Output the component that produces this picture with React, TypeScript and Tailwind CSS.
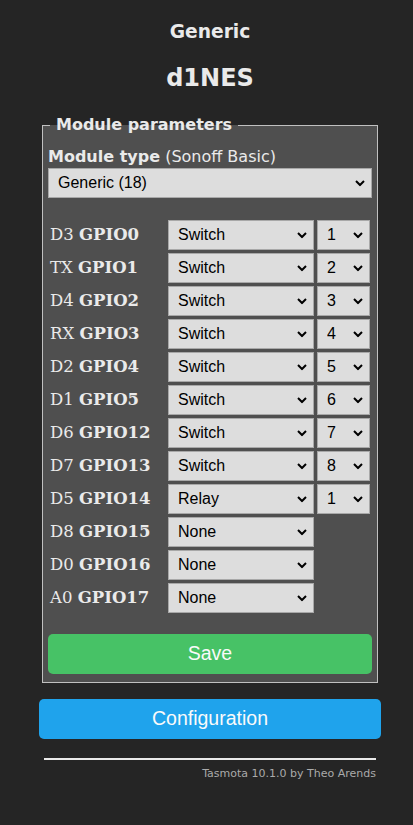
import React from "react";

const rows: { pin: string; gpio: string; fn: string; idx?: string }[] = [
  { pin: "D3", gpio: "GPIO0", fn: "Switch", idx: "1" },
  { pin: "TX", gpio: "GPIO1", fn: "Switch", idx: "2" },
  { pin: "D4", gpio: "GPIO2", fn: "Switch", idx: "3" },
  { pin: "RX", gpio: "GPIO3", fn: "Switch", idx: "4" },
  { pin: "D2", gpio: "GPIO4", fn: "Switch", idx: "5" },
  { pin: "D1", gpio: "GPIO5", fn: "Switch", idx: "6" },
  { pin: "D6", gpio: "GPIO12", fn: "Switch", idx: "7" },
  { pin: "D7", gpio: "GPIO13", fn: "Switch", idx: "8" },
  { pin: "D5", gpio: "GPIO14", fn: "Relay", idx: "1" },
  { pin: "D8", gpio: "GPIO15", fn: "None" },
  { pin: "D0", gpio: "GPIO16", fn: "None" },
  { pin: "A0", gpio: "GPIO17", fn: "None" },
];

function Chevron() {
  return (
    <svg
      className="pointer-events-none absolute right-[7px] top-1/2 -translate-y-1/2"
      width="10"
      height="7"
      viewBox="0 0 10 7"
    >
      <path d="M1 1.5 L5 5.5 L9 1.5" fill="none" stroke="#000" strokeWidth="2" />
    </svg>
  );
}

function Select({ value, className }: { value: string; className: string }) {
  return (
    <div className={"relative " + className}>
      <select
        defaultValue={value}
        className="h-[30px] w-full appearance-none border border-[#a8a8a8] bg-[#dddddd] pl-[9px] text-[16px] text-black outline-none"
        style={{ fontFamily: "'Liberation Sans', Arial, sans-serif" }}
      >
        <option>{value}</option>
      </select>
      <Chevron />
    </div>
  );
}

export default function App() {
  return (
    <div
      className="min-h-[825px] bg-[#252525] text-[#eaeaea]"
      style={{ fontFamily: "'DejaVu Sans', Verdana, sans-serif" }}
    >
      <div className="ml-[39px] w-[342px] pt-[21px]">
        <div className="text-center">
          <h3 className="text-[18.7px] font-bold leading-[22px]">Generic</h3>
          <h2 className="mt-[21px] text-[24px] font-bold leading-[28px]">d1NES</h2>
        </div>

        <fieldset className="mx-[3px] mt-[24px] border border-[#c0c0c0] bg-[#4f4f4f] px-[5px] pb-[8px]">
          <legend className="ml-[2px] px-[6px] text-[16px] font-bold leading-[18px]">
            Module parameters
          </legend>
          <div className="mt-[13px] text-[16px] leading-[20px]">
            <b>Module type</b> (Sonoff Basic)
          </div>
          <Select value="Generic (18)" className="mt-[1px] w-[324px]" />

          <div className="mt-[22px] flex flex-col gap-[3px]">
            {rows.map((r) => (
              <div key={r.gpio} className="flex items-center">
                <div
                  className="w-[120px] pl-[2px] text-[16.5px]"
                  style={{ fontFamily: "'DejaVu Serif', Georgia, serif" }}
                >
                  {r.pin} <b>{r.gpio}</b>
                </div>
                <Select value={r.fn} className="w-[146px]" />
                {r.idx && <Select value={r.idx} className="ml-[3px] w-[53px]" />}
              </div>
            ))}
          </div>

          <button
            className="mt-[21px] h-[40px] w-[324px] rounded-[5px] bg-[#47c266] text-[19.5px] text-[#fafafa]"
            style={{ fontFamily: "'Liberation Sans', Arial, sans-serif" }}
          >
            Save
          </button>
        </fieldset>

        <button
          className="mt-[16px] h-[40px] w-[342px] rounded-[5px] bg-[#1fa3ec] text-[19.5px] text-[#fafafa]"
          style={{ fontFamily: "'Liberation Sans', Arial, sans-serif" }}
        >
          Configuration
        </button>

        <div className="mx-[5px] mt-[19px] border-t-2 border-[#eaeaea]" />
        <div className="mx-[5px] mt-[6px] text-right text-[11px] text-[#aaaaaa]">
          Tasmota 10.1.0 by Theo Arends
        </div>
      </div>
    </div>
  );
}
